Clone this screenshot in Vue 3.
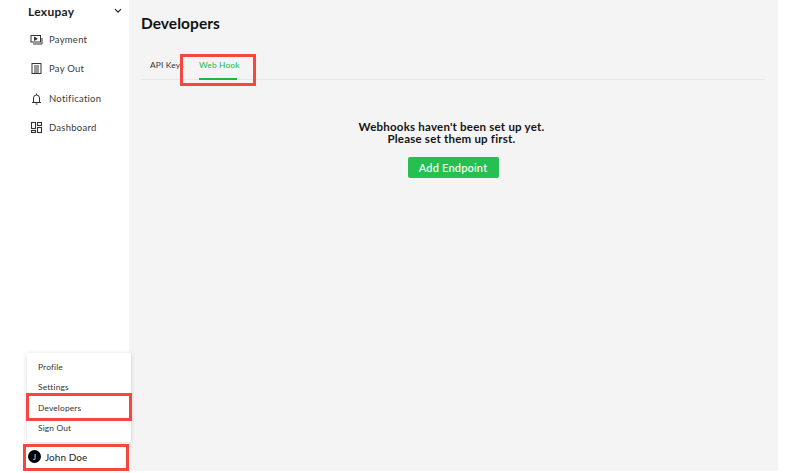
<template>
  <div class="page">
    <aside class="sidebar">
      <div class="brand">
        <span>Lexupay</span>
        <svg class="chev" width="8" height="6" viewBox="0 0 8 6"><path d="M1 1.2 4 4.2 7 1.2" fill="none" stroke="#222" stroke-width="1.2"/></svg>
      </div>
      <nav class="nav">
        <div class="nav-item">
          <svg width="13" height="12" viewBox="0 0 13 12" fill="none" stroke="#333" stroke-width="1"><rect x="1" y="1.5" width="9.5" height="6.5"/><path d="M12 4v6H3"/><path d="M4.5 3.2 7.2 4.8 4.5 6.4z" fill="#333"/></svg>
          <span>Payment</span>
        </div>
        <div class="nav-item">
          <svg width="13" height="13" viewBox="0 0 13 13" fill="none" stroke="#333" stroke-width="1"><rect x="2" y="1.5" width="9" height="10"/><path d="M4 4h5M4 6h5M4 8h5M4 10h5"/></svg>
          <span>Pay Out</span>
        </div>
        <div class="nav-item">
          <svg width="13" height="13" viewBox="0 0 13 13" fill="none" stroke="#333" stroke-width="1"><path d="M2 10.5h9M3.5 10.5V6a3 3 0 0 1 6 0v4.5"/><path d="M6.5 1.5v1.5M5.5 12h2"/></svg>
          <span>Notification</span>
        </div>
        <div class="nav-item">
          <svg width="13" height="13" viewBox="0 0 13 13" fill="none" stroke="#333" stroke-width="1.1"><rect x="1.5" y="1.5" width="4" height="6"/><rect x="7.5" y="1.5" width="4" height="3"/><rect x="7.5" y="6.5" width="4" height="5"/><rect x="1.5" y="9.5" width="4" height="2"/></svg>
          <span>Dashboard</span>
        </div>
      </nav>
      <div class="user">
        <span class="avatar">J</span>
        <span>John Doe</span>
      </div>
    </aside>
    <main class="main">
      <h1 class="title">Developers</h1>
      <div class="tabs">
        <div class="tab">API Keys</div>
        <div class="tab active">Web Hook</div>
      </div>
      <section class="empty">
        <p class="msg">Webhooks haven't been set up yet.<br>Please set them up first.</p>
        <button class="add">Add Endpoint</button>
      </section>
    </main>
    <div class="menu">
      <div class="menu-item">Profile</div>
      <div class="menu-item">Settings</div>
      <div class="menu-item">Developers</div>
      <div class="menu-item">Sign Out</div>
    </div>
    <div class="mark mark-tab"></div>
    <div class="mark mark-dev"></div>
    <div class="mark mark-user"></div>
  </div>
</template>

<script setup>
</script>

<style>
html, body { margin: 0; background: #fff; }
</style>

<style scoped>
.page {
  position: relative;
  width: 802px;
  height: 473px;
  overflow: hidden;
  display: flex;
  font-family: "Lato", "Liberation Sans", sans-serif;
  color: #1c1c1c;
  background: #fff;
}
.sidebar {
  width: 129px;
  height: 471px;
  flex: none;
  display: flex;
  flex-direction: column;
  box-sizing: border-box;
  padding: 3px 0 0 0;
}
.brand {
  display: flex;
  align-items: center;
  justify-content: space-between;
  padding: 0 7px 0 28px;
  font-size: 12px;
  font-weight: 700;
  letter-spacing: 0.3px;
  height: 16px;
}
.nav { display: flex; flex-direction: column; margin-top: 6px; }
.nav-item {
  display: flex;
  align-items: center;
  gap: 6px;
  height: 29.3px;
  padding-left: 30px;
  font-size: 9.5px;
  color: #3a3a3a;
  letter-spacing: 0.25px;
}
.user {
  margin-top: auto;
  display: flex;
  align-items: center;
  gap: 4px;
  height: 27px;
  padding-left: 28px;
  font-size: 10px;
  letter-spacing: 0.05px;
  margin-bottom: 1px;
}
.avatar {
  width: 13px;
  height: 13px;
  border-radius: 50%;
  background: #000;
  color: #fff;
  font-size: 7px;
  display: flex;
  align-items: center;
  justify-content: center;
}
.main {
  width: 649px;
  height: 471px;
  flex: none;
  background: #f4f4f4;
  box-sizing: border-box;
  padding: 13px 13px 0 12px;
}
.title {
  margin: 0;
  font-size: 15.5px;
  line-height: 21px;
  font-weight: 700;
  letter-spacing: 0.05px;
  color: #111;
}
.tabs {
  display: flex;
  margin-top: 15px;
  height: 30px;
  border-bottom: 1px solid #e8e8e8;
  font-size: 8.4px;
  letter-spacing: 0.15px;
}
.tab {
  padding: 11px 0 0 9px;
  width: 49px;
  box-sizing: border-box;
  white-space: nowrap;
  color: #333;
}
.tab.active {
  position: relative;
  color: #1eb83f;
  width: 38px;
  padding-left: 0;
  margin-left: 9px;
  text-align: center;
  box-sizing: content-box;
  height: 19px;
}
.tab.active::after {
  content: "";
  position: absolute;
  left: 0;
  right: 0;
  bottom: -1px;
  height: 2px;
  background: #1eb83f;
}
.empty {
  display: flex;
  flex-direction: column;
  align-items: center;
  margin-top: 41px;
}
.msg {
  margin: 0 3px 0 0;
  text-align: center;
  font-size: 11.5px;
  line-height: 12px;
  font-weight: 700;
  letter-spacing: 0.22px;
  color: #141414;
}
.add {
  margin-top: 12px;
  width: 91px;
  height: 21px;
  border: none;
  border-radius: 2px;
  background: #27bf52;
  color: #fff;
  font-family: inherit;
  font-size: 11px;
  font-weight: 500;
  letter-spacing: 0.2px;
  padding: 0;
}
.menu {
  position: absolute;
  left: 27px;
  top: 353px;
  width: 104px;
  height: 89px;
  background: #fff;
  box-shadow: 0 1px 5px rgba(0, 0, 0, 0.16);
  box-sizing: border-box;
  padding-top: 4px;
}
.menu-item {
  height: 20.4px;
  line-height: 20.4px;
  padding-left: 11px;
  font-size: 8.4px;
  color: #333;
  letter-spacing: 0.15px;
}
.mark {
  position: absolute;
  box-sizing: border-box;
  border: 3px solid #f4473d;
}
.mark-tab { left: 180px; top: 54px; width: 76px; height: 32px; }
.mark-dev { left: 26px; top: 393px; width: 106px; height: 28px; }
.mark-user { left: 23px; top: 444px; width: 106px; height: 27px; }
</style>
